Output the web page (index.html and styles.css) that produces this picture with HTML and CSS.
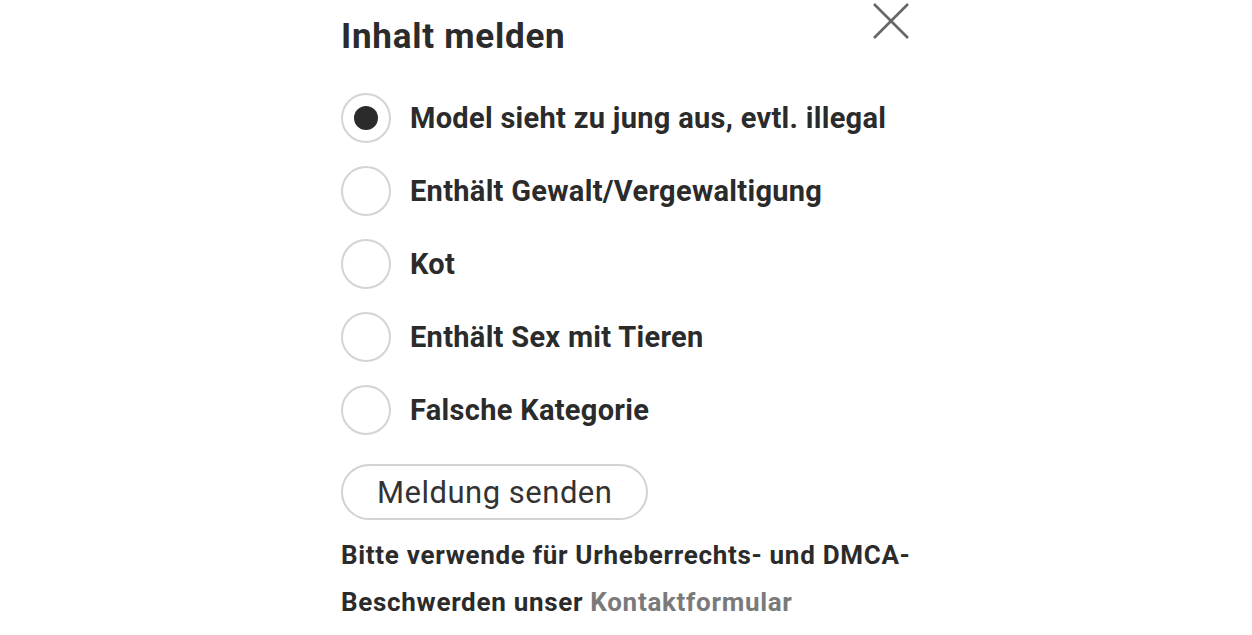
FILE: index.html
```html
<!DOCTYPE html>
<html lang="de">
  <head>
    <meta charset="UTF-8" />
    <meta name="viewport" content="width=device-width, initial-scale=1.0" />
    <title>Inhalt melden</title>
    <link rel="stylesheet" href="styles.css">
  </head>
  <body>
    <div class="report">
      <div class="report-head">
        <h1>Inhalt melden</h1>
        <button class="close" type="button" aria-label="Schließen">
          <svg viewBox="0 0 40 40" width="40" height="40">
            <path d="M3 3 L37 37 M37 3 L3 37" stroke="#666" stroke-width="2.6" fill="none" />
          </svg>
        </button>
      </div>

      <form class="options">
        <label class="option">
          <input type="radio" name="reason" checked />
          <span class="dot"></span>
          Model sieht zu jung aus, evtl. illegal
        </label>
        <label class="option">
          <input type="radio" name="reason" />
          <span class="dot"></span>
          Enthält Gewalt/Vergewaltigung
        </label>
        <label class="option">
          <input type="radio" name="reason" />
          <span class="dot"></span>
          Kot
        </label>
        <label class="option">
          <input type="radio" name="reason" />
          <span class="dot"></span>
          Enthält Sex mit Tieren
        </label>
        <label class="option">
          <input type="radio" name="reason" />
          <span class="dot"></span>
          Falsche Kategorie
        </label>

        <button class="send" type="button">Meldung senden</button>
      </form>

      <p class="note">
        Bitte verwende für Urheberrechts- und DMCA-<br />Beschwerden unser
        <a href="#">Kontaktformular</a>
      </p>
    </div>
  </body>
</html>
```

FILE: styles.css
```css
body {
  margin: 0;
  font-family: Roboto, "Liberation Sans", sans-serif;
  color: #2b2b2b;
  background: #fff;
}
.report {
  width: 570px;
  margin-left: 341px;
}
.report-head {
  display: flex;
  justify-content: space-between;
  align-items: flex-start;
  height: 93px;
}
h1 {
  margin: 16px 0 0;
  font-size: 35px;
  font-weight: 700;
  line-height: 42px;
  letter-spacing: 0.75px;
}
.close {
  border: none;
  background: none;
  padding: 0;
  margin: 1px 0 0 0;
  width: 40px;
  height: 40px;
  cursor: pointer;
}
.options {
  display: flex;
  flex-direction: column;
  gap: 23px;
}
.option {
  display: flex;
  align-items: center;
  gap: 19px;
  height: 50px;
  font-size: 29px;
  font-weight: 700;
  letter-spacing: 0.3px;
  cursor: pointer;
}
.option input {
  display: none;
}
.dot {
  width: 46px;
  height: 46px;
  border: 2px solid #d4d4d4;
  border-radius: 50%;
  display: flex;
  align-items: center;
  justify-content: center;
  flex-shrink: 0;
}
.option input:checked + .dot::after {
  content: "";
  width: 24px;
  height: 24px;
  border-radius: 50%;
  background: #2b2b2b;
}
.send {
  align-self: flex-start;
  margin-top: 6px;
  height: 56px;
  padding: 0 34px;
  font-family: inherit;
  font-size: 31px;
  letter-spacing: 0.5px;
  color: #333;
  background: #fff;
  border: 2px solid #d2d2d2;
  border-radius: 28px;
}
.note {
  margin: 12px 0 0;
  font-size: 26px;
  font-weight: 700;
  line-height: 47px;
  letter-spacing: 0.7px;
}
.note a {
  color: #7a7a7a;
  text-decoration: none;
}
```
